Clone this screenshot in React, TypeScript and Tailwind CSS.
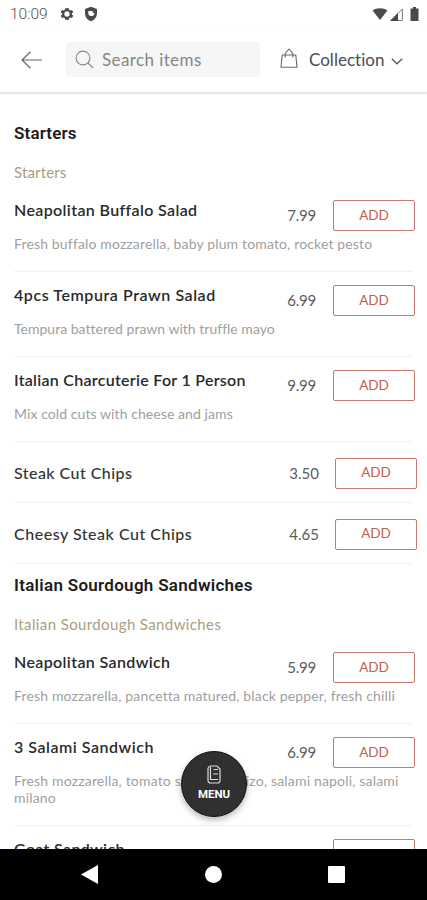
import React from "react";

type Item = {
  name: string;
  price: string;
  desc?: string;
  nameClass: string;
  descClass?: string;
};

type MenuSection = { title: string; titleClass: string; subClass: string; items: Item[] };

const sections: MenuSection[] = [
  {
    title: "Starters",
    titleClass: "tracking-[0.15px]",
    subClass: "tracking-[0.15px]",
    items: [
      { name: "Neapolitan Buffalo Salad", nameClass: "tracking-[0.37px]", price: "7.99", desc: "Fresh buffalo mozzarella, baby plum tomato, rocket pesto", descClass: "tracking-[0.15px]" },
      { name: "4pcs Tempura Prawn Salad", nameClass: "tracking-[0.56px]", price: "6.99", desc: "Tempura battered prawn with truffle mayo", descClass: "tracking-[0.01px]" },
      { name: "Italian Charcuterie For 1 Person", nameClass: "tracking-[0.28px]", price: "9.99", desc: "Mix cold cuts with cheese and jams", descClass: "tracking-[0.08px]" },
      { name: "Steak Cut Chips", nameClass: "tracking-[0.45px]", price: "3.50" },
      { name: "Cheesy Steak Cut Chips", nameClass: "tracking-[0.52px]", price: "4.65" },
    ],
  },
  {
    title: "Italian Sourdough Sandwiches",
    titleClass: "tracking-[0.29px]",
    subClass: "tracking-[0.38px]",
    items: [
      { name: "Neapolitan Sandwich", nameClass: "tracking-[0.37px]", price: "5.99", desc: "Fresh mozzarella, pancetta matured, black pepper, fresh chilli", descClass: "tracking-[0.16px]" },
      { name: "3 Salami Sandwich", nameClass: "tracking-[0.53px]", price: "6.99", desc: "Fresh mozzarella, tomato sauce, chorizo, salami napoli, salami milano", descClass: "tracking-[0.18px]" },
      { name: "Goat Sandwich", nameClass: "tracking-[0.33px]", price: "6.99", desc: "Goat cheese, rocket, tomato" },
    ],
  },
];

function AddButton() {
  return (
    <button className="h-[31px] w-[82px] shrink-0 rounded-[2px] border-[1.5px] border-[#c47a6c] text-[13.5px] leading-none text-[#bd6250]">
      ADD
    </button>
  );
}

function Row({ item }: { item: Item }) {
  if (!item.desc) {
    return (
      <div className="pl-[14px]">
        <div className="flex h-[60px] items-center pt-[2px] pr-[10px]">
          <span className={`flex-1 text-[16px] font-medium text-[#333] ${item.nameClass}`}>{item.name}</span>
          <span className="mr-4 text-[15px] text-[#5c5c5c]">{item.price}</span>
          <AddButton />
        </div>
        <div className="mr-[15px] h-px bg-[#f1f1f1]" />
      </div>
    );
  }
  return (
    <div className="pl-[14px]">
      <div className="flex pt-[13px] pr-3">
        <span className={`flex-1 text-[16px] leading-5 font-semibold text-[#2a2a2a] ${item.nameClass}`}>{item.name}</span>
        <span className="mr-[17px] pt-[5px] text-[15px] leading-5 tracking-[-0.2px] text-[#5c5c5c]">{item.price}</span>
        <AddButton />
      </div>
      <p className={`mt-[4px] mb-[19px] w-[390px] text-[14px] leading-[17px] text-[#a0a0a0] ${item.descClass ?? ""}`}>{item.desc}</p>
      <div className="mr-[15px] h-px bg-[#f1f1f1]" />
    </div>
  );
}

function StatusBar() {
  return (
    <div className="flex h-7 shrink-0 items-center pl-[10px] text-[#4a4a4a]">
      <span className="w-[49px] pt-px font-['Roboto',sans-serif] text-[15.5px] font-light text-[#555]">10:09</span>
      <svg className="size-4" viewBox="0 0 24 24" fill="currentColor">
        <path fillRule="evenodd" d="M19.4 13a7.500 7.500 0 0 0 0-2l2.100-1.600-2-3.500-2.500 1a7.300 7.300 0 0 0-1.700-1L15 3.300H9.100l-.4 2.600a7.300 7.300 0 0 0-1.700 1l-2.500-1-2 3.500L4.600 11a7.500 7.500 0 0 0 0 2l-2.100 1.600 2 3.500 2.500-1a7.300 7.300 0 0 0 1.700 1l.4 2.600H15l.3-2.600a7.300 7.300 0 0 0 1.700-1l2.500 1 2-3.500zM12 16a4 4 0 1 1 0-8 4 4 0 0 1 0 8z" />
      </svg>
      <svg className="ml-2 size-4" viewBox="0 0 24 24" fill="currentColor">
        <path fillRule="evenodd" d="M12 1 3 4.500V11c0 5.500 3.800 10.500 9 12 5.200-1.500 9-6.500 9-12V4.500zM8 7.500h6.500V10H17v1.500c-.3 2-2 3.600-4.200 3.600S8 14 8 11.500z" />
      </svg>
      <svg className="ml-auto h-[13px] w-4" viewBox="0 0 16 14" fill="currentColor">
        <path d="M0 2.800C4.500-.6 11.500-.6 16 2.800L8 13z" />
      </svg>
      <svg className="ml-[2px] size-[13px]" viewBox="0 0 13 13">
        <path d="M12.400 1v11.400H1z" fill="none" stroke="#777" />
        <path d="M8 5v8H0z" fill="currentColor" />
      </svg>
      <svg className="mr-[8px] ml-[7px] h-[14px] w-[9px]" viewBox="0 0 9 14" fill="currentColor">
        <path d="M3 0h3v1.500h2.500V14H.5V1.500H3z" />
      </svg>
    </div>
  );
}

function Header() {
  return (
    <header className="flex h-[65px] shrink-0 items-center border-b border-[#e4e4e4] pb-px pl-[21px] shadow-[0_1px_2px_rgba(0,0,0,0.12)]">
      <svg className="h-[18px] w-[21px]" viewBox="0 0 21 18" fill="none" stroke="#666" strokeWidth="1.200">
        <path d="M21 9H1M9.500.8 1 9l8.500 8.200" />
      </svg>
      <div className="ml-6 flex h-[35px] w-[194px] items-center rounded-[4px] bg-[#f6f6f6] pl-[9px]">
        <svg className="size-[19px]" viewBox="0 0 19 19" fill="none" stroke="#888" strokeWidth="1.100">
          <circle cx="8" cy="8" r="6.900" />
          <path d="m13 13 5 5" />
        </svg>
        <span className="ml-2 text-[17px] tracking-[0.4px] text-[#858585]">Search items</span>
      </div>
      <svg className="ml-5 mb-[3px] h-5 w-[18px]" viewBox="0 0 18 20" fill="none" stroke="#666" strokeWidth="1.100">
        <path d="M2.200 7h13.600L17 19.300H1zM5.200 9.500V5.500L9 1l3.800 4.500v4" strokeLinejoin="round" />
      </svg>
      <span className="ml-[11px] text-[17px] tracking-[0.02px] text-[#4d4d4d]">Collection</span>
      <svg className="ml-[7px] mt-[3px] h-[7px] w-3" viewBox="0 0 12 7" fill="none" stroke="#555" strokeWidth="1.200">
        <path d="m.8.8 5.200 5 5.200-5" />
      </svg>
    </header>
  );
}

export default function App() {
  return (
    <div className="relative flex h-[900px] w-[427px] flex-col overflow-hidden bg-white font-['Lato','Liberation_Sans',sans-serif] [font-variant-ligatures:none]">
      <StatusBar />
      <Header />
      <main className="min-h-0 flex-1 overflow-hidden pt-[19px]">
        {sections.map((s) => (
          <section key={s.title}>
            <div className="h-[75px] pt-[11px] pl-[14px]">
              <h2 className={`font-['Roboto',sans-serif] text-[17px] leading-5 font-semibold text-[#1c1c1c] ${s.titleClass}`}>{s.title}</h2>
              <h3 className={`mt-[19px] text-[15px] leading-5 text-[#ab9d80] ${s.subClass}`}>{s.title}</h3>
            </div>
            {s.items.map((it) => (
              <Row key={it.name} item={it} />
            ))}
          </section>
        ))}
      </main>
      <nav className="flex h-[51px] shrink-0 items-center bg-black pl-[81px]">
        <svg className="h-[19px] w-[17px]" viewBox="0 0 17 19" fill="#fff">
          <path d="M17 0v19L0 9.500z" />
        </svg>
        <span className="ml-[107px] size-[17px] rounded-full bg-white" />
        <span className="ml-[106px] size-[17px] rounded-[1px] bg-white" />
      </nav>
      <button className="absolute top-[751px] left-[181px] flex size-[66px] flex-col items-center rounded-full border border-[#111] bg-[#303030] pt-[13px] text-white shadow-[0_3px_6px_rgba(0,0,0,0.28)]">
        <svg className="h-[19px] w-[14px]" viewBox="0 0 14 19" fill="none" stroke="#ddd" strokeWidth="1.200">
          <path d="M4 1h6l3 3v11.500a2.500 2.500 0 0 1-2.500 2.500h-7A2.500 2.500 0 0 1 1 15.500V4a3 3 0 0 1 3-3z" />
          <path d="M3.500 2v12.500h7.500M6.500 4.500H11M6 9h5" />
        </svg>
        <span className="mt-[3px] font-['Roboto',sans-serif] text-[11.5px] leading-[14px] font-bold">MENU</span>
      </button>
    </div>
  );
}
